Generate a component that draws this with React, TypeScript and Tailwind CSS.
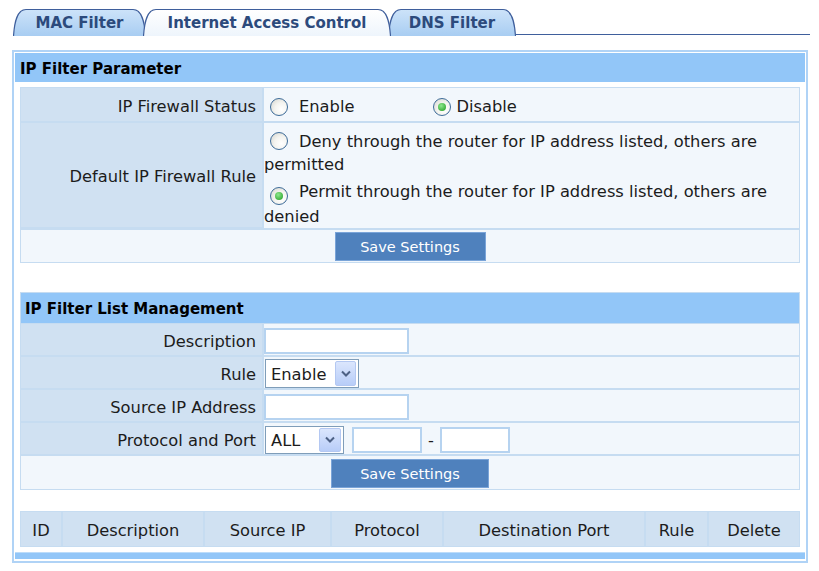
import React from "react";

function TabShape({ w, active }: { w: number; active?: boolean }) {
  const id = active ? "gActive" : "gInactive";
  return (
    <svg className="absolute inset-0" width={w} height={28} viewBox={`0 0 ${w} 28`}>
      <defs>
        <linearGradient id={id} x1="0" y1="0" x2="0" y2="1">
          {active ? (
            <>
              <stop offset="0" stopColor="#ffffff" />
              <stop offset="1" stopColor="#eef5fc" />
            </>
          ) : (
            <>
              <stop offset="0" stopColor="#cde3f9" />
              <stop offset="1" stopColor="#a8cdf2" />
            </>
          )}
        </linearGradient>
      </defs>
      <path
        d={`M0.5 28 C1.5 14 4 1.5 13 1.5 H${w - 13} C${w - 4} 1.5 ${w - 1.5} 14 ${w - 0.5} 28`}
        fill={`url(#${id})`}
        stroke="#3f5f9c"
        strokeWidth="1.2"
      />
    </svg>
  );
}

function Radio({ checked, className = "" }: { checked?: boolean; className?: string }) {
  return (
    <span
      className={`inline-flex items-center justify-center w-[18px] h-[18px] rounded-full border border-[#3d6b98] bg-[radial-gradient(circle_at_65%_65%,#ffffff_0%,#f4f4f0_45%,#d2d2cb_100%)] align-[-3px] ${className}`}
    >
      {checked && (
        <span className="w-[8px] h-[8px] rounded-full bg-[radial-gradient(circle_at_40%_35%,#8ee88e,#1e9a1e)]" />
      )}
    </span>
  );
}

function Chevron() {
  return (
    <svg width="10" height="7" viewBox="0 0 10 7">
      <path d="M1 1.5 L5 5.5 L9 1.5" fill="none" stroke="#4d6185" strokeWidth="2" />
    </svg>
  );
}

function Select({ value, className, inner }: { value: string; className: string; inner: string }) {
  return (
    <div className={`flex items-center border border-[#7f9db9] bg-white ${className}`}>
      <span className="pl-[5px] pt-[4px] flex-1 leading-none">{value}</span>
      <span
        className={`flex items-center justify-center mr-[2px] rounded-[2px] bg-gradient-to-b from-[#dbe6fd] to-[#b8cdf8] border border-[#b4c8f2] ${inner}`}
      >
        <Chevron />
      </span>
    </div>
  );
}

const label = "bg-[#d0e1f2] flex items-center justify-end pr-[6px] pt-[5px]";
const val = "bg-[#f2f7fc] flex items-center";
const input = "bg-white border-2 border-[#b6d3f0]";
const btn =
  "bg-[#4f81bd] border border-[#7aa4d8] text-white text-[14.5px] flex items-center justify-center pt-[3px]";

export default function App() {
  return (
    <div className="w-[819px] h-[571px] bg-white font-['DejaVu_Sans',sans-serif] text-[16.3px] text-[#1c1c1c] overflow-hidden">
      {/* Tabs */}
      <div className="flex items-end h-[36px] pl-[13px]">
        <div className="relative w-[133px] h-[28px] flex items-center justify-center pt-[3px]">
          <TabShape w={133} />
          <span className="relative font-bold text-[15px] text-[#2c4a7c]">MAC Filter</span>
        </div>
        <div className="relative z-10 -ml-[3px] w-[248px] h-[28px] flex items-center justify-center pt-[3px]">
          <TabShape w={248} active />
          <span className="relative font-bold text-[15px] text-[#2c4a7c]">Internet Access Control</span>
        </div>
        <div className="relative -ml-[3px] w-[128px] h-[28px] flex items-center justify-center pt-[3px]">
          <TabShape w={128} />
          <span className="relative font-bold text-[15px] text-[#2c4a7c]">DNS Filter</span>
        </div>
        <div className="w-[294px] h-px mb-[1px] bg-[#3f5f9c]" />
      </div>

      {/* Outer box */}
      <div className="ml-[12px] mt-[14px] w-[796px] border-2 border-[#b0d3f6] p-px pb-[2px]">
        <div className="h-[29px] bg-[#92c6f8] flex items-center pl-[5px] pt-[4px] font-bold text-[15px] text-black">
          IP Filter Parameter
        </div>

        <div className="px-[5px] pt-[5px]">
          {/* Table 1 */}
          <div className="grid grid-cols-[241px_1fr] gap-[2px] p-px bg-[#c6dcf1]">
            <div className={`h-[33px] ${label}`}>IP Firewall Status</div>
            <div className={`${val} pt-[5px]`}>
              <Radio className="ml-[6px]" />
              <span className="ml-[11px]">Enable</span>
              <Radio className="ml-[79px]" checked />
              <span className="ml-[5px]">Disable</span>
            </div>
            <div className={`h-[104px] ${label}`}>Default IP Firewall Rule</div>
            <div className="bg-[#f2f7fc] pt-[7px] leading-[23px]">
              <div>
                <span className="whitespace-nowrap">
                  <Radio className="ml-[6px] mr-[11px]" />
                  Deny through the router for IP address listed, others are
                </span>
                <br />
                permitted
              </div>
              <div className="mt-[4px]">
                <span className="whitespace-nowrap">
                  <Radio className="ml-[6px] mr-[11px]" checked />
                  Permit through the router for IP address listed, others are
                </span>
                <br />
                denied
              </div>
            </div>
            <div className="col-span-2 h-[32px] bg-[#f2f7fc] flex items-center justify-center">
              <div className={`w-[151px] h-[29px] ${btn}`}>Save Settings</div>
            </div>
          </div>

          {/* Table 2 */}
          <div className="mt-[29px] flex flex-col gap-px p-px bg-[#c6dcf1]">
            <div className="h-[30px] bg-[#92c6f8] flex items-center pl-[4px] pt-[3px] font-bold text-[15px] text-black">
              IP Filter List Management
            </div>
            <div className="grid grid-cols-[241px_1fr] gap-x-[2px] gap-y-[2px]">
              <div className={`h-[31px] ${label}`}>Description</div>
              <div className={val}>
                <div className={`w-[145px] h-[26px] mt-[2px] ${input}`} />
              </div>
              <div className={`h-[31px] ${label}`}>Rule</div>
              <div className={val}>
                <Select value="Enable" className="ml-px w-[94px] h-[29px] mt-[1px]" inner="w-[21px] h-[25px]" />
              </div>
              <div className={`h-[31px] ${label}`}>Source IP Address</div>
              <div className={val}>
                <div className={`w-[145px] h-[26px] mt-[2px] ${input}`} />
              </div>
              <div className={`h-[31px] ${label}`}>Protocol and Port</div>
              <div className={`${val} pt-[2px]`}>
                <Select value="ALL" className="ml-px w-[79px] h-[28px]" inner="w-[22px] h-[24px]" />
                <div className={`ml-[8px] w-[70px] h-[26px] ${input}`} />
                <span className="mx-[6px] pt-[4px]">-</span>
                <div className={`w-[70px] h-[26px] ${input}`} />
              </div>
              <div className="col-span-2 h-[33px] bg-[#f2f7fc] flex items-center justify-center pt-[2px]">
                <div className={`w-[158px] h-[29px] ${btn}`}>Save Settings</div>
              </div>
            </div>
          </div>

          {/* Table 3 */}
          <div className="mt-[21px] grid grid-cols-[40px_140px_125px_110px_200px_61px_1fr] gap-[2px] p-px bg-[#c6dcf1]">
            {["ID", "Description", "Source IP", "Protocol", "Destination Port", "Rule", "Delete"].map((t) => (
              <div key={t} className="h-[34px] bg-[#d0e1f2] flex items-center justify-center pt-[4px]">
                {t}
              </div>
            ))}
          </div>
        </div>

        <div className="mt-[5px] h-[7px] bg-[#92c6f8] border-t border-[#bcdcfa]" />
      </div>
    </div>
  );
}
